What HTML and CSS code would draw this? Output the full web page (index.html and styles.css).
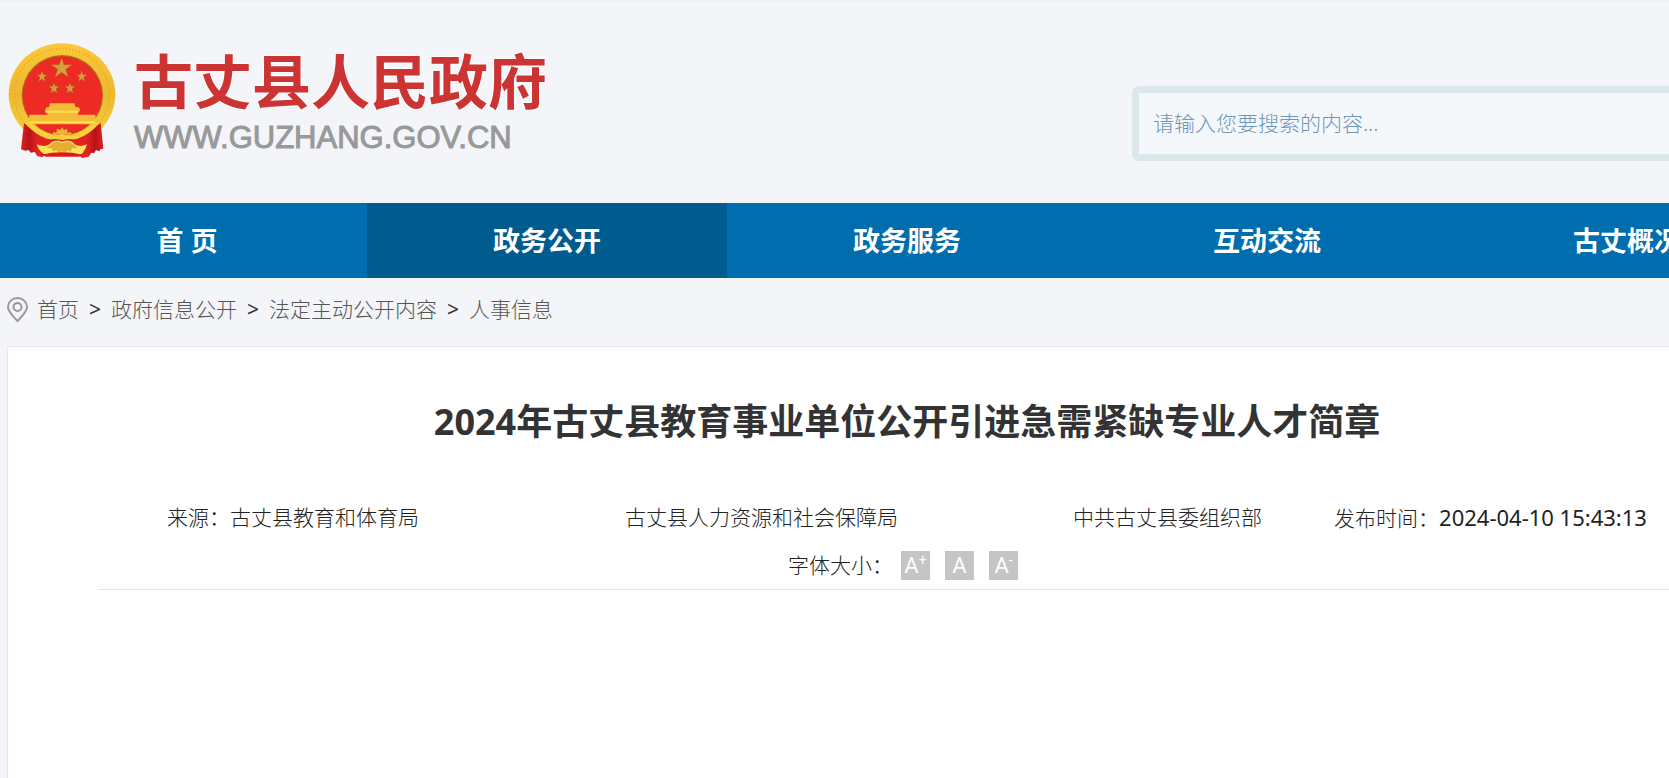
FILE: index.html
```html
<!DOCTYPE html>
<html lang="zh-CN">
<head>
  <meta charset="UTF-8">
  <meta name="viewport" content="width=device-width, initial-scale=1.0">
  <title>2024年古丈县教育事业单位公开引进急需紧缺专业人才简章</title>
  <link rel="stylesheet" href="styles.css">
</head>
<body>
  <header class="header">
    <div class="container header-inner">
      <a class="logo" href="#">
        <svg class="emblem" viewBox="21 36 327 348" aria-hidden="true">
          <defs>
            <linearGradient id="gold" x1="0" y1="0" x2="0" y2="1">
              <stop offset="0" stop-color="#fbc93a"/>
              <stop offset="0.5" stop-color="#edb730"/>
              <stop offset="1" stop-color="#fdd43e"/>
            </linearGradient>
            <linearGradient id="drape" x1="0" y1="0" x2="1" y2="0">
              <stop offset="0" stop-color="#e01f20"/>
              <stop offset="0.1" stop-color="#b91418"/>
              <stop offset="0.2" stop-color="#e32222"/>
              <stop offset="0.8" stop-color="#e32222"/>
              <stop offset="0.9" stop-color="#b91418"/>
              <stop offset="1" stop-color="#e01f20"/>
            </linearGradient>
          </defs>
          <ellipse cx="186" cy="193" rx="160" ry="153" fill="url(#gold)"/>
          <ellipse cx="186" cy="193" rx="143" ry="137" fill="none" stroke="#e3a92a" stroke-width="6" stroke-dasharray="3 7"/>
          <ellipse cx="187" cy="196" rx="122" ry="121" fill="#a8741c"/>
          <ellipse cx="187" cy="197" rx="119" ry="118" fill="#ee2a24"/>
          <!-- stars -->
          <g fill="#d3a13b" stroke="#a8641c" stroke-width="1">
            <path d="M185 83l7 21 25 0-20 14 8 24-20-15-20 15 8-24-20-14 25 0z"/>
            <path id="star" d="M126 123l4 11 11 0-9 8 4 12-10-7-10 7 4-12-9-8 11 0z"/>
            <use href="#star" x="119" y="0"/>
            <use href="#star" x="36" y="35"/>
            <use href="#star" x="84" y="35"/>
          </g>
          <!-- gate tower -->
          <path d="M150 220h73l4 12h10l4 12h-7v10h52l3 29H85l3-29h54v-10h-8l5-12h8z" fill="#f3bd3a"/>
          <path d="M136 245h100M90 277h196" stroke="#fbe04d" stroke-width="6"/>
          <!-- drapes -->
          <path d="M72 280q42 16 62 42l52 8 54-8q20-26 62-42l8 76-9 2-3 6-10-4-6 10-8-2-8 12-20 4-16-14H140l-14 12-14-4-8-12-12 2-6-8-10 2-13-4z" fill="url(#drape)"/>
          <path d="M73 278q32 36 68 48q22 6 45-6q24 12 46 6q36-12 68-48l-14-3q-28 30-56 38q-20 6-44-2q-24 8-44 2q-28-8-56-38z" fill="#fbce3c"/>
          <path d="M158 318l2-12 9 2 2-12 10 4 5-9 6 9 9-4 2 12 10-2 2 12q-28-12-57 0z" fill="#ecb436"/>
          <!-- cogwheel and sheaves -->
          <path d="M110 343q32 12 44-6q14-10 32-2q20-8 32 2q14 18 43 6q-10 34-30 34h-88q-26-8-33-34z" fill="#fde15a"/>
          <path d="M142 354q24-26 45-14q22-12 45 14l-16 1-4 10-10-5-6 10-10-6-10 6-6-10-10 5-4-10z" fill="#e7ad31"/>
          <path d="M124 374q62-14 124 0l-10 6H138z" fill="#d91c1e"/>
        </svg>
        <span class="logo-text">
          <span class="logo-name">古丈县人民政府</span>
          <span class="logo-url">WWW.GUZHANG.GOV.CN</span>
        </span>
      </a>
      <form class="search">
        <input class="search-input" type="text" aria-label="搜索" placeholder="请输入您要搜索的内容...">
      </form>
    </div>
  </header>

  <nav class="nav">
    <ul class="container nav-list">
      <li><a class="nav-link" href="#">首 页</a></li>
      <li><a class="nav-link active" href="#">政务公开</a></li>
      <li><a class="nav-link" href="#">政务服务</a></li>
      <li><a class="nav-link" href="#">互动交流</a></li>
      <li><a class="nav-link" href="#">古丈概况</a></li>
    </ul>
  </nav>

  <div class="container breadcrumb">
    <svg class="pin" viewBox="0 0 21 25" aria-hidden="true">
      <path d="M10.500 1a9.500 9 0 0 1 9.500 9c0 5-5 9-9.500 14c-4.500-5-9.500-9-9.500-14a9.500 9 0 0 1 9.500-9z"/>
      <circle cx="10.500" cy="10" r="4"/>
    </svg>
    <a href="#">首页</a>
    <span class="sep">&gt;</span>
    <a href="#">政府信息公开</a>
    <span class="sep">&gt;</span>
    <a href="#">法定主动公开内容</a>
    <span class="sep">&gt;</span>
    <a href="#">人事信息</a>
  </div>

  <main class="container article">
    <h1 class="title">2024年古丈县教育事业单位公开引进急需紧缺专业人才简章</h1>
    <div class="meta">
      <div class="meta-row">
        <span class="source-first">来源：古丈县教育和体育局</span>
        <span class="source">古丈县人力资源和社会保障局</span>
        <span class="source-last">中共古丈县委组织部</span>
        <span>发布时间：<time class="date">2024-04-10 15:43:13</time></span>
      </div>
      <div class="font-size">
        <span class="font-label">字体大小：</span>
        <button class="size-btn" type="button">A<sup>+</sup></button>
        <button class="size-btn" type="button">A</button>
        <button class="size-btn" type="button">A<sup>-</sup></button>
      </div>
    </div>
  </main>
</body>
</html>
```
FILE: styles.css
```css
* {
  box-sizing: border-box;
}
body {
  display: flex;
  flex-direction: column;
  min-height: 100vh;
  margin: 0;
  font-family: "Noto Sans", "Noto Sans CJK SC", sans-serif;
  font-size: 21px;
  line-height: 30px;
  color: #333;
  background: #f3f5f9;
  overflow: hidden;
}
a {
  color: inherit;
  text-decoration: none;
}
.container {
  min-width: 1800px;
  margin: 0 7px;
}

/* Header */
.header {
  border-top: 2px solid #eff1f5;
}
.header-inner {
  display: flex;
  justify-content: space-between;
  align-items: flex-start;
  padding: 40px 0 42px;
}
.logo {
  display: flex;
  gap: 18px;
}
.emblem {
  width: 109px;
  height: 116px;
}
.logo-text {
  display: flex;
  flex-direction: column;
  padding-top: 8px;
}
.logo-name {
  font-family: "Liberation Sans", "Noto Sans CJK SC", sans-serif;
  font-size: 59px;
  font-weight: 700;
  line-height: 68px;
  color: #c33;
  text-shadow: 0 0 3px #fff, 0 0 3px #fff, 0 0 3px #fff;
}
.logo-url {
  font-family: "Liberation Sans", Arial, sans-serif;
  font-size: 31px;
  line-height: 40px;
  color: #999;
  -webkit-text-stroke: 1px #999;
}
.search {
  width: 675px;
  margin-top: 44px;
}
.search-input {
  display: block;
  width: 100%;
  height: 75px;
  padding: 0 14px 2px;
  border: 7px solid #dce7ec;
  border-radius: 7px;
  background: #f5f8fa;
  font: inherit;
  color: #333;
}
.search-input::placeholder {
  font-weight: 300;
  color: #6f95ba;
  opacity: 1;
}

/* Navigation */
.nav {
  background: #006eae;
}
.nav-list {
  display: grid;
  grid-template-columns: repeat(5, 1fr);
  padding: 0;
  list-style: none;
}
.nav-link {
  display: block;
  font-size: 27px;
  font-weight: 700;
  line-height: 75px;
  text-align: center;
  color: #fff;
}
.nav-link.active,
.nav-link:hover {
  background: #005c8f;
}

/* Breadcrumb */
.breadcrumb {
  display: flex;
  align-items: center;
  height: 68px;
  padding-bottom: 6px;
  font-weight: 300;
  color: #555;
}
.pin {
  width: 21px;
  height: 25px;
  margin-right: 9px;
  fill: none;
  stroke: #999;
  stroke-width: 2;
}
.sep {
  margin: 0 10px;
  font-weight: 400;
  color: #333;
}

/* Article */
.article {
  flex: 1;
  padding: 48px 90px 0;
  border: 1px solid #e6e6e6;
  border-bottom: 0;
  background: #fff;
}
.title {
  margin: 0 0 44px;
  font-size: 36px;
  line-height: 54px;
  text-align: center;
}
.meta {
  border-bottom: 1px solid #e6e6e6;
}
.meta-row,
.font-size {
  display: flex;
  justify-content: center;
  align-items: center;
  height: 48px;
  font-weight: 300;
  color: #222;
}
.source-first {
  margin-right: 206px;
}
.source {
  margin-right: 175px;
}
.source-last {
  margin-right: 72px;
}
.date {
  font-size: 22px;
  font-weight: 400;
}
.font-size {
  gap: 15px;
  padding-right: 8px;
}
.font-label {
  margin-right: -7px;
}
.size-btn {
  width: 29px;
  height: 29px;
  padding: 0;
  border: 0;
  background: #c5c5c5;
  font: 22px/29px Roboto, sans-serif;
  color: #fff;
  white-space: nowrap;
  cursor: pointer;
}
.size-btn sup {
  font-size: 14px;
  line-height: 0;
}
```
